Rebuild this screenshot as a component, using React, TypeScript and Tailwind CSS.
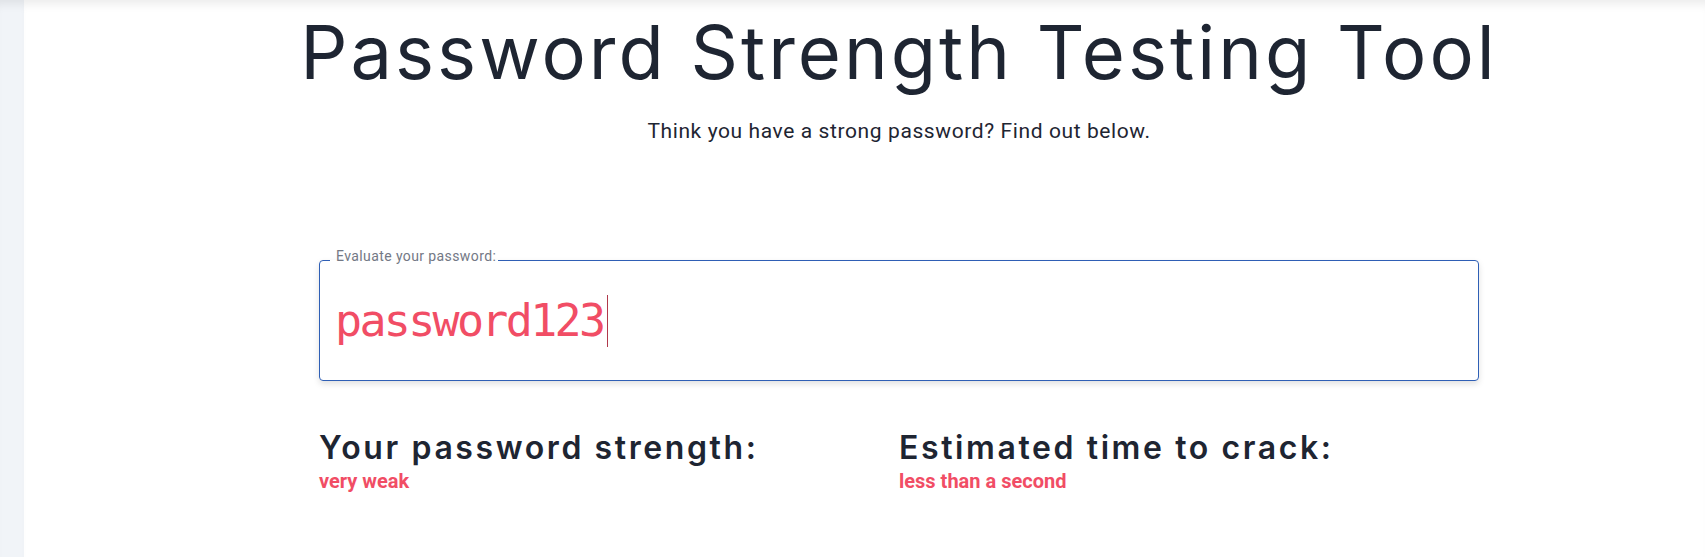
import React from "react";

const headingFont = { fontFamily: "Inter, 'Open Sans', sans-serif" };

function ResultBlock({ title, value }: { title: string; value: string }) {
  return (
    <div>
      <h2 className="font-['Inter',sans-serif] text-[32px] font-semibold leading-[38px] tracking-[2.6px] text-[#1e2532]">
        {title}
      </h2>
      <p className="mt-[2px] font-['Roboto',sans-serif] text-[20px] font-bold leading-[24px] text-[#f14d65]">{value}</p>
    </div>
  );
}

export default function App() {
  return (
    <div className="flex h-screen w-full overflow-hidden bg-white">
      <aside className="h-full w-6 shrink-0 bg-[#f1f4f8] shadow-[inset_0_10px_10px_-6px_rgba(0,0,0,0.08)]" />
      <main className="h-full flex-1 shadow-[inset_0_10px_10px_-6px_rgba(0,0,0,0.08)]">
        <div className="ml-[295px] w-[1160px]">
          <div className="flex justify-center pt-[15px]">
            <h1
              className="whitespace-nowrap text-[74px] font-normal leading-none tracking-[3px] text-[#1e2532]"
              style={headingFont}
            >
              Password Strength Testing Tool
            </h1>
          </div>
          <p className="mt-[30px] text-center font-['Roboto',sans-serif] text-[21px] leading-[24px] tracking-[0.6px] text-[#1e2532]">
            Think you have a strong password? Find out below.
          </p>

          <fieldset className="mt-[105px] h-[133px] rounded-[4px] border border-[#2f5fb5] shadow-[0_3px_6px_rgba(0,0,0,0.12)]">
            <legend className="ml-[10px] pb-2 pl-[6px] pr-[2px] font-['Roboto',sans-serif] text-[14px] leading-[16px] tracking-[0.4px] text-[#737885]">
              Evaluate your password:
            </legend>
            <div className="flex items-center pl-[15px] pt-[23px]">
              <span className="font-['DejaVu_Sans_Mono',monospace] text-[45px] leading-[52px] tracking-[-2.7px] text-[#f14d65]">
                password123
              </span>
              <span className="ml-[4px] h-[52px] w-px bg-[#b0394b]" />
            </div>
          </fieldset>

          <div className="mt-[48px] grid grid-cols-2">
            <ResultBlock title="Your password strength:" value="very weak" />
            <ResultBlock title="Estimated time to crack:" value="less than a second" />
          </div>
        </div>
      </main>
    </div>
  );
}
